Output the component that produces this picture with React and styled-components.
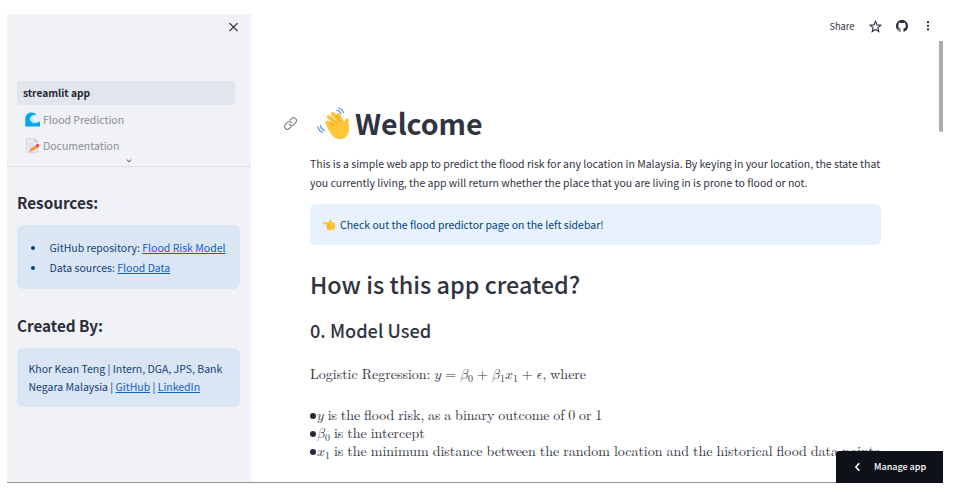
import React from "react";
import styled, { createGlobalStyle } from "styled-components";

const sans = '"Noto Sans CJK SC", "Open Sans", sans-serif';
const serif = '"Latin Modern Roman", "Liberation Serif", serif';
const math = '"Latin Modern Math", "Latin Modern Roman", "Liberation Serif", serif';

const GlobalStyle = createGlobalStyle`
  * { box-sizing: border-box; }
  body { margin: 0; background: #fff; font-family: ${sans}; color: #31333f; }
  h1, h2, h3, p, ul { margin: 0; padding: 0; font-weight: 400; }
`;

const Page = styled.div`
  height: 498px;
  padding: 14px 21px 15px 7px;
  overflow: hidden;
`;

const Frame = styled.div`
  position: relative;
  display: flex;
  height: 469px;
  border-bottom: 1px solid #929297;
`;

const Sidebar = styled.aside`
  width: 244px;
  flex: none;
  background: #f0f2f6;
`;

const SidebarTop = styled.div`
  height: 67px;
  padding: 8px 12px 0 0;
  display: flex;
  justify-content: flex-end;
  align-items: flex-start;
  svg { display: block; }
`;

const Nav = styled.nav`
  height: 86px;
  padding: 0 16px 0 10px;
  border-bottom: 1px solid #dfe1e6;
`;

const NavItem = styled.a`
  display: flex;
  align-items: center;
  height: 24px;
  margin-bottom: 2.4px;
  padding-left: ${(p) => (p.$active ? "6px" : "8px")};
  padding-bottom: ${(p) => (p.$active ? "1px" : "0")};
  border-radius: 2px;
  white-space: pre;
  gap: 3px;
  font-size: ${(p) => (p.$active ? "10.2px" : "10.5px")};
  font-weight: ${(p) => (p.$active ? 700 : 400)};
  color: ${(p) => (p.$active ? "#262838" : "#8a8c94")};
  background: ${(p) => (p.$active ? "#e1e6ed" : "transparent")};
  svg { display: block; flex: none; }
`;

const NavMore = styled.div`
  display: flex;
  justify-content: center;
  margin: -2.5px 0 0 5px;
  svg { display: block; }
`;

const SideBody = styled.div`
  padding: 23px 11px 0 10px;
`;

const SideHeading = styled.h2`
  font-size: 15.25px;
  line-height: 24px;
  font-weight: 700;
  color: #2b2d3a;
`;

const SideCard = styled.section`
  height: ${(p) => p.$height}px;
  margin: ${(p) => p.$top}px 0 ${(p) => p.$bottom}px;
  padding: ${(p) => p.$pad};
  border-radius: 6px;
  background: #dae6f4;
  color: #153f7c;
  font-size: 10.5px;
  line-height: ${(p) => p.$line}px;
  white-space: nowrap;
`;

const Bullets = styled.ul`
  list-style: none;
`;

const BulletItem = styled.li`
  display: flex;
  align-items: center;
  &::before {
    content: "";
    width: 4px;
    height: 4px;
    margin-right: 14.6px;
    border-radius: 50%;
    background: #004280;
  }
`;

const Link = styled.a`
  color: #0f62c8;
  text-decoration: underline;
  text-underline-offset: 1px;
  text-decoration-thickness: 1px;
`;

const Main = styled.main`
  flex: 1;
  min-width: 0;
  height: 468px;
  overflow: hidden;
`;

const Toolbar = styled.header`
  display: flex;
  align-items: center;
  justify-content: flex-end;
  height: 24px;
  padding-right: 9.5px;
  font-size: 9.3px;
  line-height: 14px;
  svg { display: block; }
`;

const ShareLabel = styled.span`
  padding-bottom: 1px;
`;

const ToolIcon = styled.span`
  display: flex;
  margin-left: ${(p) => p.$gap}px;
`;

const Content = styled.div`
  padding: 64px 0 0 59px;
  white-space: nowrap;
`;

const TitleRow = styled.div`
  display: flex;
  align-items: center;
  height: 42px;
  margin-left: -26px;
  svg { display: block; flex: none; }
`;

const Title = styled.h1`
  margin-left: 5px;
  font-size: 28.5px;
  line-height: 42px;
  font-weight: 700;
`;

const Hand = styled.span`
  display: flex;
  margin: 1px 0 0 20px;
`;

const Paragraph = styled.p`
  margin-top: 10px;
  font-size: 10.51px;
  line-height: 19.2px;
`;

const Notice = styled.div`
  display: flex;
  align-items: center;
  width: 570.5px;
  height: 41px;
  margin-top: 12px;
  padding-left: 13px;
  gap: 4px;
  border-radius: 6px;
  background: #e8f2fc;
  color: #004280;
  font-size: 10.5px;
  svg { display: block; }
`;

const Heading = styled.h2`
  margin-top: ${(p) => p.$top}px;
  font-size: ${(p) => p.$size}px;
  line-height: ${(p) => p.$line}px;
  font-weight: 500;
`;

const MathLine = styled.p`
  margin-top: ${(p) => p.$top || 0}px;
  width: max-content;
  height: 18px;
  font-family: ${serif};
  font-size: 14px;
  line-height: 18px;
  word-spacing: ${(p) => p.$space || 0}px;
  white-space: pre;
`;

const Var = styled.span`
  font-family: ${math};
  line-height: 0;
`;

const Sub = styled.sub`
  font-size: 10px;
  line-height: 0;
  vertical-align: -2.5px;
`;

const Dot = styled.i`
  display: inline-block;
  width: 6px;
  height: 6px;
  margin: 0 1px 1px 0;
  border-radius: 50%;
  background: #262838;
`;

const Scrollbar = styled.div`
  position: absolute;
  top: 27px;
  right: 0;
  width: 4px;
  height: 91px;
  border-radius: 0 0 2px 2px;
  background: #aaaaaf;
`;

const ManageButton = styled.button`
  position: absolute;
  right: 0;
  bottom: -1px;
  display: flex;
  align-items: center;
  width: 107px;
  height: 32px;
  padding: 0 0 1px 18px;
  gap: 13px;
  border: 0;
  border-radius: 3px 0 0 0;
  background: #0e1117;
  color: #fff;
  font: 500 9px ${sans};
  white-space: nowrap;
`;

const CloseIcon = () => (
  <svg width="11" height="11" viewBox="0 0 11 11">
    <path d="M1.5 1.2l8 8M9.5 1.2l-8 8" stroke="#262838" strokeWidth="1.2" />
  </svg>
);

const ChevronDown = () => (
  <svg width="8" height="6" viewBox="0 0 8 6">
    <path d="M1.8 1.7L4 3.8l2.2-2.1" fill="none" stroke="#74767f" strokeWidth="1.1" />
  </svg>
);

const WaveIcon = () => (
  <svg width="15" height="15" viewBox="0 0 15 15">
    <path d="M.3 14.500V7C.3 3 3 .5 6.400.5c2.300 0 4.300 1 5 2.800L9 8.500l6 1.300v4.700z" fill="#03a5ee" />
    <path d="M11.800 3.300C8.500 1.700 4.800 3.700 4.800 7c0 2.700 2.500 4.300 5.300 4.200 2 0 3.700-.6 4.600-1.900z" fill="#a8e9fa" />
    <path d="M12.500 3.200C9.500 2.800 7.300 4.500 7.500 6.700c.2 2.200 2 3.500 4.200 3.400 1.300 0 2.400-.4 3.300-1.200V3z" fill="#f0f2f6" />
  </svg>
);

const MemoIcon = () => (
  <svg width="15" height="15" viewBox="0 0 15 15">
    <path d="M1.500.7h8l3 3v10.600h-11z" fill="#eeeaf2" stroke="#d0c8d8" strokeWidth=".8" />
    <path d="M9.300.7v3.200h3.200z" fill="#c9bdd2" />
    <path d="M3.500 5h5M3.500 7.200h5M3.500 9.400h3" stroke="#d2cad9" strokeWidth=".7" />
    <path d="M4.500 13.500l1.200-3 5-3.300 1.700 2.500-4.800 3.300z" fill="#ff943f" />
    <path d="M10.700 7.200l1.500-1.100c1.300-.7 2.900 1.300 1.800 2.300l-1.600 1.300z" fill="#f43c6b" />
    <path d="M4.500 13.500l.5-1.300.8.9z" fill="#594153" />
  </svg>
);

const StarIcon = () => (
  <svg width="13" height="13" viewBox="0 0 13 13">
    <path d="M6.500 1.300l1.500 3.600 3.900.3-3 2.500.9 3.800-3.300-2-3.300 2 .9-3.800-3-2.500L5 4.900z" fill="none" stroke="#31333f" strokeWidth="1.100" />
  </svg>
);

const GithubIcon = () => (
  <svg width="12" height="12" viewBox="0 0 16 16">
    <path fill="#262838" d="M8 0C3.580 0 0 3.580 0 8c0 3.540 2.290 6.530 5.470 7.590.4.070.55-.17.55-.38 0-.19-.01-.82-.01-1.490-2.010.37-2.530-.49-2.690-.94-.09-.23-.48-.94-.82-1.130-.28-.15-.68-.52-.01-.53.63-.01 1.080.58 1.230.82.72 1.210 1.870.87 2.330.66.07-.52.28-.87.51-1.070-1.780-.2-3.640-.89-3.640-3.950 0-.87.31-1.590.82-2.150-.08-.2-.36-1.020.08-2.120 0 0 .67-.21 2.200.82.64-.18 1.320-.27 2-.27s1.360.09 2 .27c1.530-1.040 2.200-.82 2.200-.82.44 1.100.16 1.920.08 2.120.51.56.82 1.270.82 2.150 0 3.070-1.870 3.750-3.650 3.950.29.25.54.73.54 1.480 0 1.070-.01 1.930-.01 2.200 0 .21.15.46.55.38A8.010 8.010 0 0016 8c0-4.420-3.580-8-8-8z" />
  </svg>
);

const DotsIcon = () => (
  <svg width="12" height="12" viewBox="0 0 12 12" fill="#262838">
    <circle cx="6" cy="2.200" r="1.150" />
    <circle cx="6" cy="5.800" r="1.150" />
    <circle cx="6" cy="9.400" r="1.150" />
  </svg>
);

const LinkIcon = () => (
  <svg width="13" height="13" viewBox="0 0 24 24" fill="none" stroke="#777982" strokeWidth="1.900" strokeLinecap="round">
    <path d="M10 13.500a5.300 5.300 0 0 0 7.800.4l3.600-3.600a5.200 5.200 0 0 0-7.400-7.400L10.700 6.200" />
    <path d="M14 10.500a5.300 5.300 0 0 0-7.800-.4l-3.600 3.600a5.200 5.200 0 0 0 7.400 7.400l3.300-3.300" />
  </svg>
);

const WavingHand = () => (
  <svg width="33" height="33" viewBox="0 0 33 33">
    <g fill="none" stroke="#ffc23a" strokeLinecap="round">
      <path d="M10.200 15.500l7.300 7" strokeWidth="3.800" />
      <path d="M11.600 9.800l8.700 9" strokeWidth="3.800" />
      <path d="M15.800 6.800l8.200 9.700" strokeWidth="3.800" />
      <path d="M21.300 8l5.200 9" strokeWidth="3.600" />
      <path d="M30 13.500c-1.300 2.600-.2 4.500.2 7" strokeWidth="3.800" />
    </g>
    <path d="M9 17.500L24 11l4 6 4 1.800c.4 6.200-1.300 12.400-7.800 13.300-7.600 1.100-11.800-7-15.200-14.600z" fill="#ffc636" />
    <path d="M12 14.400l4.600 4.500M14.300 10l5.500 6.500M18.800 8l4.700 6.500" fill="none" stroke="#dc9322" strokeWidth=".9" strokeLinecap="round" />
    <path d="M19.800 3.300c1.900.2 3.400 1.400 4 3.200M21.500 1c2.500.5 4.300 2.200 4.900 4.700M3.500 18.500c.4 2.500 1.800 4.200 3.900 4.900M1 19.900c.5 2.700 2.200 4.700 4.500 5.400" fill="none" stroke="#4a8ce8" strokeWidth="1.100" strokeLinecap="round" />
  </svg>
);

const PointingHand = () => (
  <svg width="13" height="12" viewBox="0 0 13 12">
    <path d="M.8 3.300h4.300L7 1c1-.8 1.900.2 1.300 1.200L8 3c2.700-.2 4.300 1 4.300 4 0 3.100-1.800 4.300-4.400 4.300H5.800c-1.700 0-2-.8-1.800-1.900-.8-.6-.8-1.400-.3-2.200-.6-.7-.5-1.400 0-1.900H.8c-1-.2-1-1.800 0-2z" fill="#ffc634" />
    <path d="M4.100 5.300h2.500M3.800 7.300h2.600M4.200 9.300H6.300" stroke="#e59a1b" strokeWidth=".6" />
  </svg>
);

const ChevronLeft = () => (
  <svg width="7" height="10" viewBox="0 0 7 10">
    <path d="M5.300 1.300L1.900 5l3.400 3.700" fill="none" stroke="#fff" strokeWidth="1.600" />
  </svg>
);

export default function App() {
  return (
    <Page>
      <GlobalStyle />
      <Frame>
        <Sidebar>
          <SidebarTop><CloseIcon /></SidebarTop>
          <Nav>
            <NavItem $active>streamlit app</NavItem>
            <NavItem><WaveIcon />Flood Prediction</NavItem>
            <NavItem><MemoIcon />Documentation</NavItem>
            <NavMore><ChevronDown /></NavMore>
          </Nav>
          <SideBody>
            <SideHeading>Resources:</SideHeading>
            <SideCard $height={64} $top={11} $bottom={24} $pad="13px 0 0 14px" $line={20}>
              <Bullets>
                <BulletItem><span>GitHub repository: <Link>Flood Risk Model</Link></span></BulletItem>
                <BulletItem><span>Data sources: <Link>Flood Data</Link></span></BulletItem>
              </Bullets>
            </SideCard>
            <SideHeading>Created By:</SideHeading>
            <SideCard $height={59} $top={11} $bottom={0} $pad="12px 0 0 11.5px" $line={17.6}>
              Khor Kean Teng | Intern, DGA, JPS, Bank<br />
              Negara Malaysia | <Link>GitHub</Link> | <Link>LinkedIn</Link>
            </SideCard>
          </SideBody>
        </Sidebar>
        <Main>
          <Toolbar>
            <ShareLabel>Share</ShareLabel>
            <ToolIcon $gap={14}><StarIcon /></ToolIcon>
            <ToolIcon $gap={14}><GithubIcon /></ToolIcon>
            <ToolIcon $gap={14}><DotsIcon /></ToolIcon>
          </Toolbar>
          <Content>
            <TitleRow>
              <LinkIcon />
              <Hand><WavingHand /></Hand>
              <Title>Welcome</Title>
            </TitleRow>
            <Paragraph>
              This is a simple web app to predict the flood risk for any location in Malaysia. By keying in your location, the state that<br />
              you currently living, the app will return whether the place that you are living in is prone to flood or not.
            </Paragraph>
            <Notice><PointingHand />Check out the flood predictor page on the left sidebar!</Notice>
            <Heading $top={21} $size={23.4} $line={36}>How is this app created?</Heading>
            <Heading $top={14} $size={18.2} $line={28}>0. Model Used</Heading>
            <MathLine $top={20} $space={-0.7}>Logistic Regression: <Var>𝑦</Var> = <Var>𝛽</Var><Sub>0</Sub> + <Var>𝛽</Var><Sub>1</Sub><Var>𝑥</Var><Sub>1</Sub> + <Var>𝜖</Var>, where</MathLine>
            <MathLine $top={23} $space={-0.9}><Dot /><Var>𝑦</Var> is the flood risk, as a binary outcome of 0 or 1</MathLine>
            <MathLine $space={-0.7}><Dot /><Var>𝛽</Var><Sub>0</Sub> is the intercept</MathLine>
            <MathLine $space={-0.7}><Dot /><Var>𝑥</Var><Sub>1</Sub> is the minimum distance between the random location and the historical flood data points</MathLine>
          </Content>
        </Main>
        <Scrollbar />
        <ManageButton><ChevronLeft />Manage app</ManageButton>
      </Frame>
    </Page>
  );
}
